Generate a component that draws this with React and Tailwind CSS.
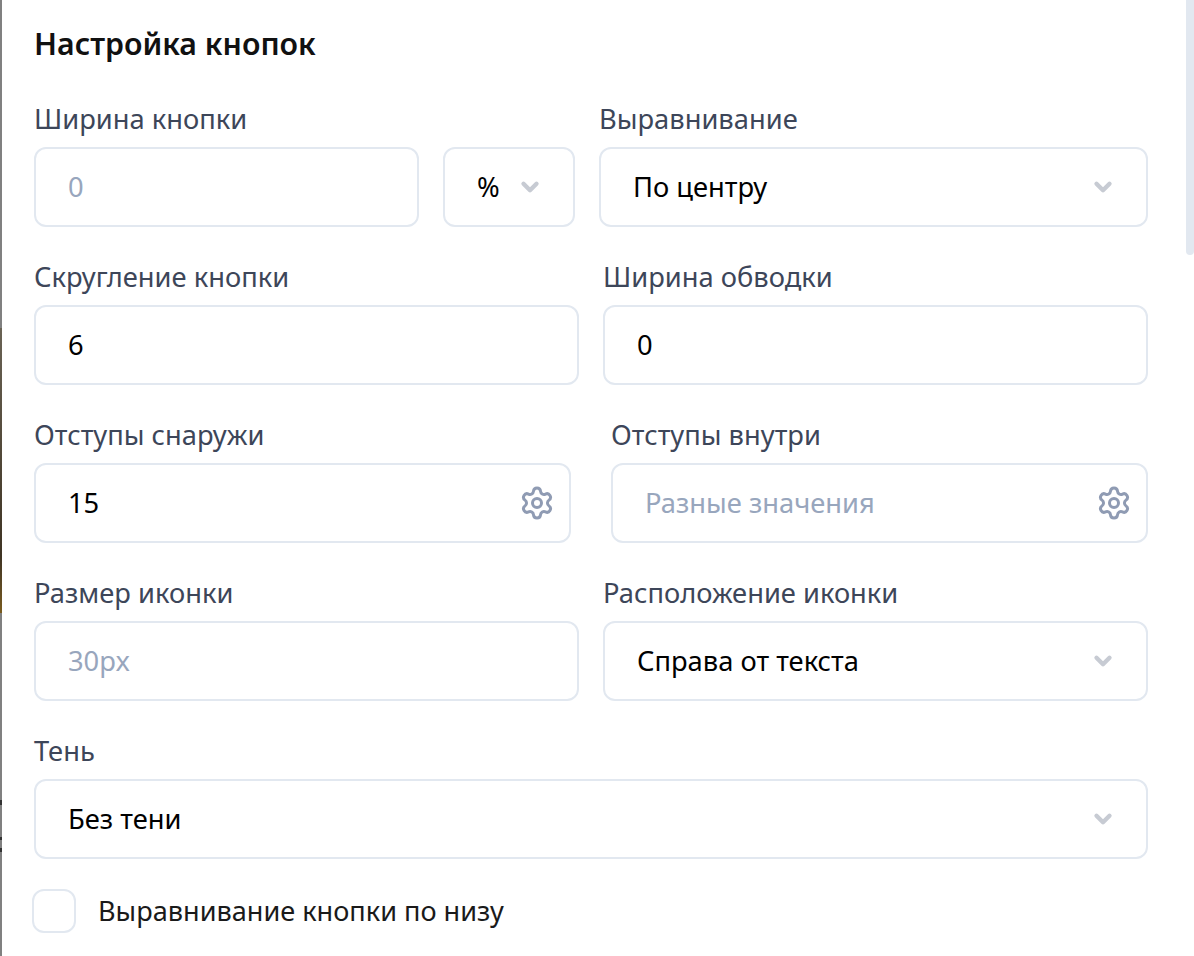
import { ChevronDown, Settings } from 'lucide-react';

const Label = ({ children }) => (
    <div className="text-[27.3px] leading-[36px] text-[#3d4659] h-[36px] mb-[10px]">{children}</div>
);

const Field = ({ label, value, placeholder, select, gear, className }) => (
    <div className={className}>
        {label ? <Label>{label}</Label> : <div className="h-[46px]" />}
        <div className="h-[80px] border-2 border-[#e2e8f0] rounded-[12px] bg-white flex items-center justify-between pl-[32px] pr-[20px]">
            <span className={`text-[27.3px] ${placeholder ? 'text-[#98a6bd]' : 'text-black'}`}>{value || placeholder}</span>
            {select && <ChevronDown size={26} strokeWidth={4} className="text-[#c7cbd3] mr-[10px]" />}
            {gear && <Settings size={36} strokeWidth={2} className="text-[#8f9bb3] mr-[-6px]" />}
        </div>
    </div>
);

const App = () => {
    return (
        <div className="w-[1194px] h-[956px] overflow-hidden bg-white flex font-['Noto_Sans',sans-serif]">
            <div className="w-[2px] h-full flex flex-col shrink-0 bg-[#808080]">
                <div className="h-[328px]" />
                <div className="h-[285px] bg-gradient-to-b from-[#6a6355] via-[#3f3424] via-80% to-[#7a5c1e]" />
                <div className="h-[187px]" />
                <div className="h-[5px] bg-[#333]" />
                <div className="h-[32px]" />
                <div className="h-[3px] bg-[#333]" />
                <div className="h-[8px]" />
                <div className="h-[4px] bg-[#333]" />
            </div>
            <div className="w-[1146px] pl-[32px] pt-[23px] shrink-0">
                <h2 className="text-[30.3px] leading-[42px] font-semibold text-[#111] mb-[36px]">Настройка кнопок</h2>
                <div className="flex flex-col gap-[32px]">
                    <div className="flex">
                        <Field label="Ширина кнопки" placeholder="0" className="w-[385px] mr-[24px]" />
                        <Field value="%" select className="w-[132px] mr-[24px]" />
                        <Field label="Выравнивание" value="По центру" select className="w-[549px]" />
                    </div>
                    <div className="flex gap-[24px]">
                        <Field label="Скругление кнопки" value="6" className="w-[545px]" />
                        <Field label="Ширина обводки" value="0" className="w-[545px]" />
                    </div>
                    <div className="flex gap-[40px]">
                        <Field label="Отступы снаружи" value="15" gear className="w-[537px]" />
                        <Field label="Отступы внутри" placeholder="Разные значения" gear className="w-[537px]" />
                    </div>
                    <div className="flex gap-[24px]">
                        <Field label="Размер иконки" placeholder="30px" className="w-[545px]" />
                        <Field label="Расположение иконки" value="Справа от текста" select className="w-[545px]" />
                    </div>
                    <Field label="Тень" value="Без тени" select />
                </div>
                <div className="flex items-center mt-[30px] ml-[-2px]">
                    <div className="w-[44px] h-[44px] border-2 border-[#e2e8f0] rounded-[12px] bg-white" />
                    <span className="ml-[22px] text-[27.1px] text-[#1a1a1a]">Выравнивание кнопки по низу</span>
                </div>
            </div>
            <div className="flex-1 flex justify-end">
                <div className="w-[8px] h-[255px] bg-[#e2e8f0] rounded-b-[4px]" />
            </div>
        </div>
    );
};

export default App;
